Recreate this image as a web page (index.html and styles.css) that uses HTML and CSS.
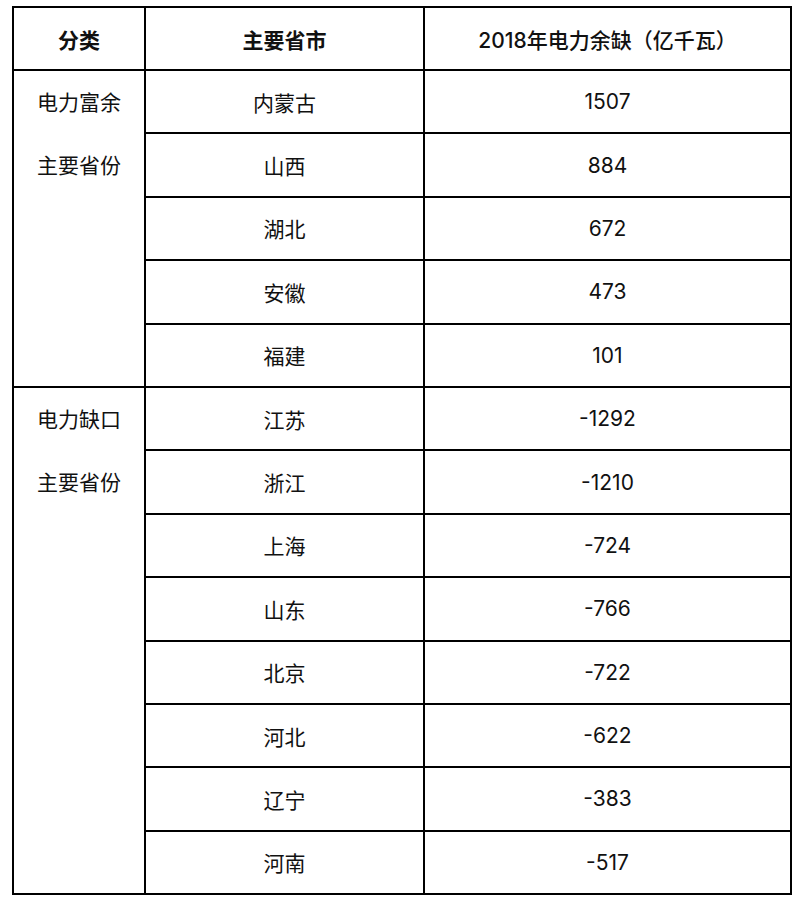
FILE: index.html
```html
<!DOCTYPE html>
<html lang="zh-CN">
<head>
<meta charset="utf-8">
<title>2018年电力余缺</title>
<link rel="stylesheet" href="styles.css">
</head>
<body>
<table class="grid">
  <colgroup>
    <col class="c1">
    <col class="c2">
    <col class="c3">
  </colgroup>
  <thead>
    <tr class="head">
      <th>分类</th>
      <th>主要省市</th>
      <th class="unit">2018年电力余缺（亿千瓦）</th>
    </tr>
  </thead>
  <tbody>
    <tr>
      <td class="cat" rowspan="5"><div class="line">电力富余</div><div class="line">主要省份</div></td>
      <td>内蒙古</td><td>1507</td>
    </tr>
    <tr><td>山西</td><td>884</td></tr>
    <tr><td>湖北</td><td>672</td></tr>
    <tr><td>安徽</td><td>473</td></tr>
    <tr><td>福建</td><td>101</td></tr>
    <tr>
      <td class="cat" rowspan="8"><div class="line">电力缺口</div><div class="line">主要省份</div></td>
      <td>江苏</td><td>-1292</td>
    </tr>
    <tr><td>浙江</td><td>-1210</td></tr>
    <tr><td>上海</td><td>-724</td></tr>
    <tr><td>山东</td><td>-766</td></tr>
    <tr><td>北京</td><td>-722</td></tr>
    <tr><td>河北</td><td>-622</td></tr>
    <tr><td>辽宁</td><td>-383</td></tr>
    <tr><td>河南</td><td>-517</td></tr>
  </tbody>
</table>
</body>
</html>
```
FILE: styles.css
```css
html, body {
  margin: 0;
  padding: 0;
  background: #ffffff;
}
body {
  font-family: Inter, "Noto Sans CJK SC", sans-serif;
  color: #111111;
}
.grid {
  border-collapse: collapse;
  margin: 6px 0 0 12px;
  width: 778px;
  table-layout: fixed;
  font-size: 21px;
}
.c1 { width: 132px; }
.c2 { width: 279px; }
.c3 { width: 367px; }
.grid th,
.grid td {
  border: 2px solid #000;
  padding: 0;
  text-align: center;
  vertical-align: middle;
}
.head {
  height: 63px;
}
.head th {
  font-weight: 700;
  font-family: "Noto Sans CJK SC", sans-serif;
}
.head th.unit {
  font-family: Inter, "Noto Sans CJK SC", sans-serif;
  font-weight: 500;
}
tbody tr {
  height: 63.4px;
}
.grid td.cat {
  vertical-align: top;
}
.line {
  height: 63px;
  line-height: 63px;
}
```
